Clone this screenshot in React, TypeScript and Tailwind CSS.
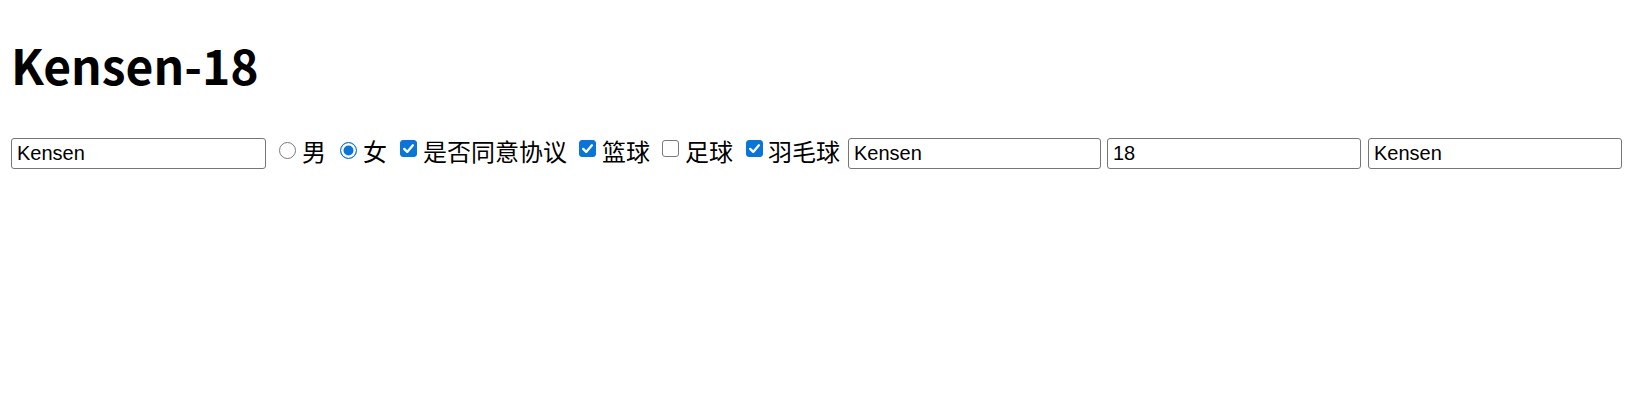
import React from "react";

function Radio({ checked, className }: { checked?: boolean; className: string }) {
  return (
    <input
      type="radio"
      name="sex"
      defaultChecked={checked}
      className={
        "h-[17px] w-[17px] shrink-0 appearance-none rounded-full border-[1.5px] border-[#7a7a7a] bg-white checked:border-[#0a75d9] checked:bg-[#0a75d9] checked:shadow-[inset_0_0_0_2.5px_#ffffff] " +
        className
      }
    />
  );
}

function Check({ checked, className }: { checked?: boolean; className: string }) {
  return (
    <span className={"relative inline-flex h-[17px] w-[17px] shrink-0 " + className}>
      <input
        type="checkbox"
        defaultChecked={checked}
        className="peer h-[17px] w-[17px] appearance-none rounded-[3px] border-[1.5px] border-[#7a7a7a] bg-white checked:border-[#0a75d9] checked:bg-[#0a75d9]"
      />
      <svg
        viewBox="0 0 17 17"
        className="pointer-events-none absolute inset-0 hidden h-[17px] w-[17px] peer-checked:block"
      >
        <path d="M4.2 8.9 L7.2 11.9 L12.9 5.3" fill="none" stroke="#ffffff" strokeWidth="2.3" strokeLinecap="round" strokeLinejoin="round" />
      </svg>
    </span>
  );
}

const inputCls =
  "h-[31px] rounded-[3px] border border-[#767676] bg-white px-[5px] font-['Liberation_Sans',Arial,sans-serif] text-[20px] text-black outline-none";

export default function App() {
  return (
    <div className="min-h-[402px] w-[1650px] bg-white text-black font-['Noto_Sans_CJK_SC',sans-serif]">
      <h1 className="pl-[11px] pt-[28px] text-[48px] font-bold leading-[72px]">Kensen-18</h1>
      <div className="mt-[38px] flex items-start pl-[11px]">
        <input type="text" defaultValue="Kensen" className={"w-[255px] " + inputCls} />
        <Radio className="ml-[13px] mt-[4px]" />
        <span className="ml-[6px] text-[24px] leading-[25px]">男</span>
        <Radio checked className="ml-[14px] mt-[4px]" />
        <span className="ml-[6px] text-[24px] leading-[25px]">女</span>
        <Check checked className="ml-[13px] mt-[2px]" />
        <span className="ml-[6px] text-[24px] leading-[25px]">是否同意协议</span>
        <Check checked className="ml-[12px] mt-[2px]" />
        <span className="ml-[6px] text-[24px] leading-[25px]">篮球</span>
        <Check className="ml-[12px] mt-[2px]" />
        <span className="ml-[6px] text-[24px] leading-[25px]">足球</span>
        <Check checked className="ml-[13px] mt-[2px]" />
        <span className="ml-[5px] text-[24px] leading-[25px]">羽毛球</span>
        <input type="text" defaultValue="Kensen" className={"ml-[8px] w-[253px] " + inputCls} />
        <input type="text" defaultValue="18" className={"ml-[6px] w-[254px] " + inputCls} />
        <input type="text" defaultValue="Kensen" className={"ml-[7px] w-[254px] " + inputCls} />
      </div>
    </div>
  );
}
